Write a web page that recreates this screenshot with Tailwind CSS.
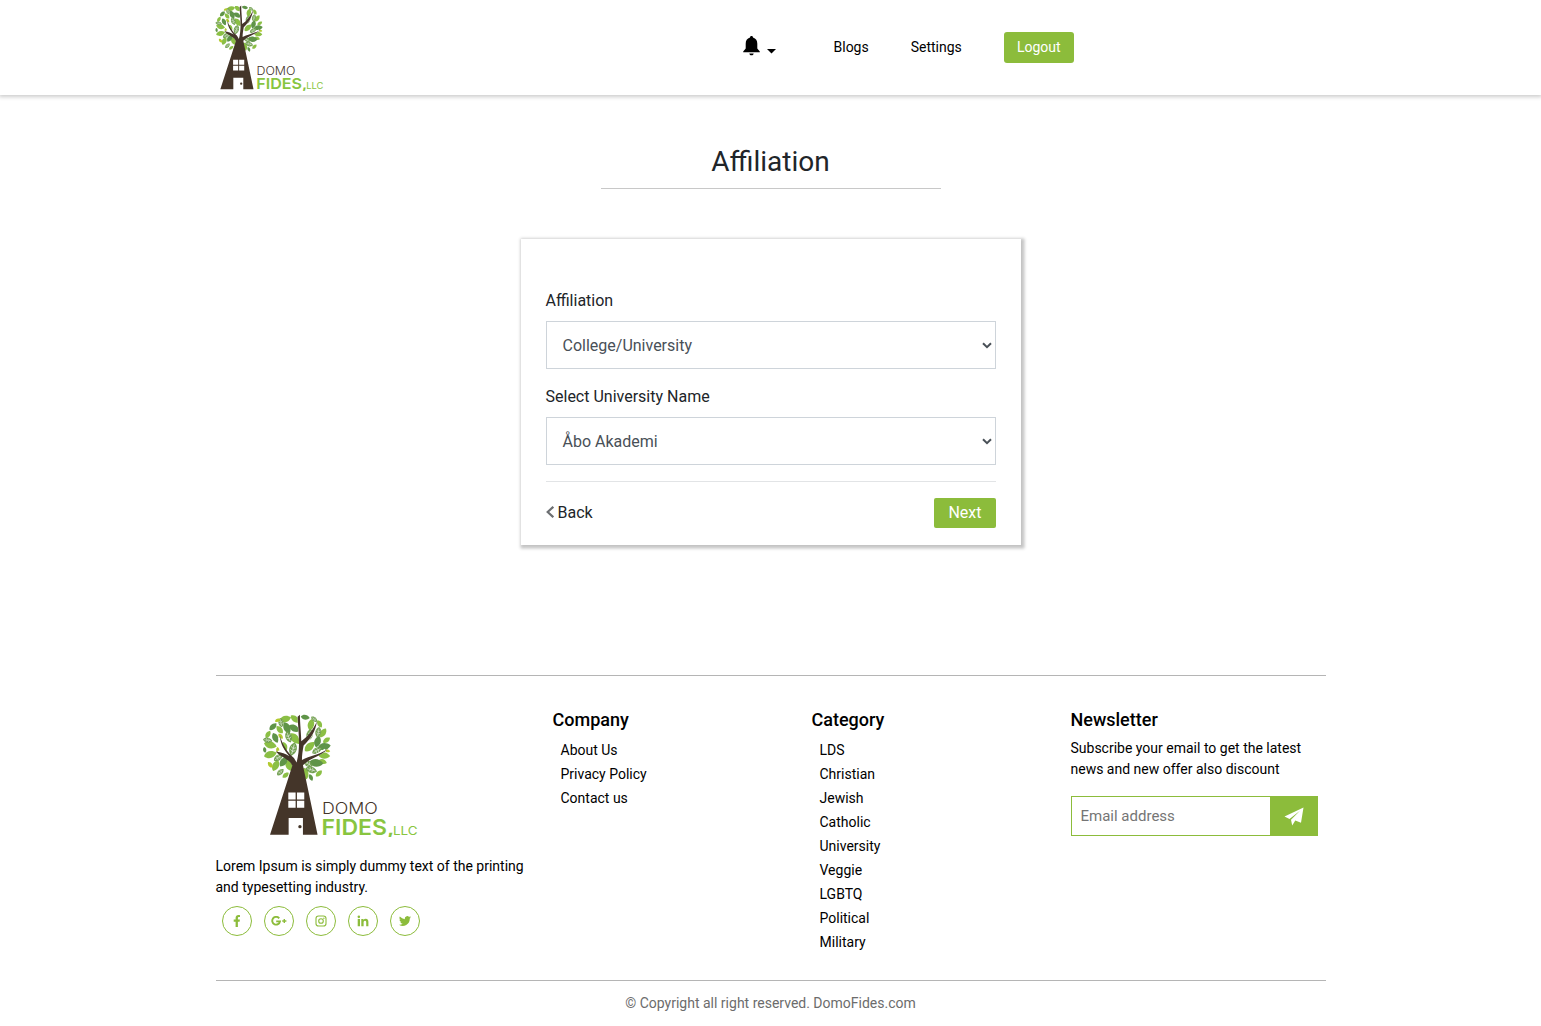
<!DOCTYPE html>
<html lang="en">
<head>
<meta charset="utf-8">
<title>Affiliation</title>
<script src="https://cdn.jsdelivr.net/npm/@tailwindcss/browser@4"></script>
</head>
<body class="bg-white font-[Roboto,sans-serif] text-[14px] leading-[21px] text-black">
<!-- shared logo artwork -->
<svg width="0" height="0" class="absolute" aria-hidden="true">
  <defs>
    <path id="leaf" d="M-18 0C-10 -13 7 -13 18 0C8 13 -9 13 -18 0Z"/>
    <g id="vein"><path d="M-18 0C-10 -13 7 -13 18 0C8 13 -9 13 -18 0Z"/><path d="M-13 0H13M-6 -7L-2 0L-6 7M2 -7L6 0L2 7" fill="none" stroke="#fff" stroke-width="1.5"/></g>
    <symbol id="logo" viewBox="36 26 470 370">
      <g transform="translate(30 21)">
        <g fill="#8bbf45">
          <use href="#leaf" transform="translate(75 20) rotate(-15)"/>
          <use href="#leaf" transform="translate(104 20) rotate(40) scale(.9)"/>
          <use href="#leaf" transform="translate(58 52) rotate(-130) scale(.8)"/>
          <use href="#leaf" transform="translate(104 79) rotate(50) scale(1.15)"/>
          <use href="#leaf" transform="translate(30 98) rotate(15) scale(1.1)"/>
          <use href="#leaf" transform="translate(152 38) rotate(100)"/>
          <use href="#leaf" transform="translate(178 35) rotate(60) scale(.7)"/>
          <use href="#leaf" transform="translate(188 62) rotate(-55) scale(.9)"/>
          <use href="#leaf" transform="translate(148 103) rotate(-45) scale(1.1)"/>
          <use href="#leaf" transform="translate(30 127) rotate(-15) scale(1.1)"/>
          <use href="#leaf" transform="translate(46 160) rotate(-65)"/>
          <use href="#leaf" transform="translate(86 160) rotate(65)"/>
          <use href="#leaf" transform="translate(192 130) rotate(5)"/>
          <use href="#leaf" transform="translate(188 148) rotate(20) scale(.7)"/>
          <use href="#leaf" transform="translate(135 184) rotate(75)"/>
          <use href="#leaf" transform="translate(76 189) rotate(-40) scale(.65)"/>
          <use href="#leaf" transform="translate(176 184) rotate(-45) scale(.7)"/>
          <use href="#leaf" transform="translate(199 84) rotate(-35) scale(.7)"/>
          <use href="#leaf" transform="translate(73 103) rotate(70) scale(.8)"/>
          <use href="#leaf" transform="translate(23 66) rotate(-60) scale(.7)"/>
        </g>
        <g fill="#5f9448">
          <use href="#leaf" transform="translate(102 48) rotate(30)"/>
          <use href="#leaf" transform="translate(80 47) rotate(65) scale(1.05)"/>
          <use href="#leaf" transform="translate(135 15) rotate(10) scale(.75)"/>
          <use href="#leaf" transform="translate(45 77) rotate(65) scale(.9)"/>
          <use href="#leaf" transform="translate(172 88) rotate(-75)"/>
          <use href="#leaf" transform="translate(192 103) rotate(-10) scale(1.1)"/>
          <use href="#leaf" transform="translate(168 152) rotate(5) scale(1.2)"/>
          <use href="#leaf" transform="translate(70 148) rotate(-55)"/>
          <use href="#leaf" transform="translate(38 43) rotate(-45) scale(.8)"/>
          <use href="#leaf" transform="translate(13 113) rotate(80) scale(.5)"/>
          <use href="#leaf" transform="translate(152 196) rotate(65) scale(.6)"/>
          <use href="#leaf" transform="translate(92 194) rotate(100) scale(.6)"/>
        </g>
        <g fill="#719f50">
          <use href="#vein" transform="translate(62 31) rotate(80) scale(.8)"/>
          <use href="#vein" transform="translate(85 74) rotate(70)"/>
          <use href="#vein" transform="translate(98 111) rotate(105) scale(1.15)"/>
          <use href="#vein" transform="translate(148 68) rotate(100)"/>
          <use href="#vein" transform="translate(174 60) rotate(100) scale(.9)"/>
          <use href="#vein" transform="translate(170 115) rotate(-30) scale(.9)"/>
          <use href="#vein" transform="translate(54 136) rotate(-35) scale(.9)"/>
          <use href="#vein" transform="translate(143 154) rotate(35) scale(.9)"/>
          <use href="#vein" transform="translate(153 173) rotate(15)"/>
          <use href="#vein" transform="translate(60 180) rotate(-45) scale(.75)"/>
          <use href="#vein" transform="translate(22 84) rotate(10) scale(.8)"/>
          <use href="#vein" transform="translate(162 21) rotate(40) scale(.65)"/>
        </g>
        <g fill="#b2ca2e">
          <use href="#leaf" transform="translate(61 72) rotate(50) scale(.55)"/>
          <use href="#leaf" transform="translate(30 158) rotate(50) scale(.6)"/>
          <use href="#leaf" transform="translate(52 24) rotate(-25) scale(.5)"/>
          <use href="#leaf" transform="translate(202 116) rotate(5) scale(.45)"/>
          <use href="#leaf" transform="translate(52 113) rotate(85) scale(.5)"/>
        </g>
      </g>
      <g fill="none" stroke="#fff" stroke-width="8">
        <path d="M136 186C126 160 94 150 88 98M144 170C158 120 146 90 146 36M154 125C176 104 190 80 198 54M150 176C180 154 200 152 226 134M124 160C104 146 96 142 82 140"/>
      </g>
      <g fill="#443529">
        <path d="M126 182C120 164 98 160 76 139C94 142 106 146 117 153C101 133 90 116 89 92C97 118 110 140 131 158L139 172C151 126 145 90 142 34L149 28C149 56 153 86 153 108C173 94 190 72 200 48C196 79 181 101 160 121C157 138 155 150 155 164C180 151 202 151 232 132C208 155 180 158 158 180L202 389H158V339H115V389H59Z"/>
      </g>
      <path d="M114 262h22v21h-22zM140 262h22v21h-22zM114 287h22v21h-22zM140 287h22v21h-22z" fill="#fff"/>
      <circle cx="149" cy="365" r="5" fill="#443529"/>
      <text x="215" y="328" font-family="Inter, sans-serif" font-size="49" font-weight="300" fill="#443529" textLength="168" lengthAdjust="spacingAndGlyphs">DOMO</text>
      <text x="214" y="389" font-family="Inter, sans-serif" font-size="65" font-weight="600" fill="#88c540" textLength="219" lengthAdjust="spacingAndGlyphs">FIDES,</text>
      <text x="429" y="389" font-family="Inter, sans-serif" font-size="36" font-weight="400" fill="#88c540" textLength="74" lengthAdjust="spacingAndGlyphs">LLC</text>
    </symbol>
  </defs>
</svg>

<header class="h-[95px] bg-white shadow-[0_1px_4px_1px_rgba(0,0,0,0.2)]">
  <div class="mx-auto flex h-full w-[1110px] items-start">
    <a class="-ml-[0.5px] block pt-[4.5px]"><svg class="h-[86px] w-[109px]"><use href="#logo"/></svg></a>
    <nav class="ml-[418.5px] flex h-[95px] items-center">
      <a class="flex items-center gap-[7px]">
        <svg class="-mt-[3px] h-5 w-[17px]" viewBox="0 0 17 20"><path d="M8.500 0C9.500 0 10 .7 10 1.600C13 2.400 14.300 4.800 14.300 7.800V12.500L16.800 15.600V16.300H.2V15.600L2.700 12.500V7.800C2.700 4.800 4 2.400 7 1.600C7 .7 7.500 0 8.500 0ZM6.300 17.400H10.700C10.500 18.700 9.600 19.300 8.500 19.300S6.500 18.700 6.300 17.400Z"/></svg>
        <svg class="mt-[7px] h-[5px] w-[9px]" viewBox="0 0 9 5"><path d="M0 0H9L4.500 4.500Z"/></svg>
      </a>
      <a class="ml-[58px]">Blogs</a>
      <a class="ml-[42px]">Settings</a>
      <a class="ml-[42px] flex h-[31px] w-[70px] items-center justify-center rounded-[3px] bg-[#8cbc3b] text-white">Logout</a>
    </nav>
  </div>
</header>

<main class="flex h-[580px] flex-col items-center pt-[49px]">
  <h1 class="flex h-[45px] w-[340px] justify-center border-b border-[#c8c8c8] pt-px text-[28px] leading-[34px] text-[#212529]">Affiliation</h1>
  <form class="mt-[50px] h-[306px] w-[500px] bg-white px-[25px] pt-[50px] text-[16px] leading-6 text-[#212529] shadow-[1px_1px_3px_2.5px_#c4c4c4]">
    <label class="block">Affiliation</label>
    <div class="mt-2 flex h-12 items-center justify-between border border-[#ced4da] pr-[3px] pl-4 text-[#495057]"><span class="pt-0.5">College/University</span>
      <svg class="h-[7px] w-[10px]" viewBox="0 0 10 7"><path d="M1 1.200L5 5.200L9 1.200" fill="none" stroke="#495057" stroke-width="2"/></svg>
    </div>
    <label class="mt-4 block">Select University Name</label>
    <div class="mt-2 flex h-12 items-center justify-between border border-[#ced4da] pr-[3px] pl-4 text-[#495057]"><span class="pt-0.5">Åbo Akademi</span>
      <svg class="h-[7px] w-[10px]" viewBox="0 0 10 7"><path d="M1 1.200L5 5.200L9 1.200" fill="none" stroke="#495057" stroke-width="2"/></svg>
    </div>
    <div class="mt-4 flex items-center justify-between border-t border-[#e2e4e6] pt-4">
      <a class="flex items-center gap-1"><svg class="-mt-0.5 h-3 w-2" viewBox="0 0 8 12"><path d="M7.300 .8L1.700 6L7.300 11.200" fill="none" stroke="#6c6f72" stroke-width="2.200"/></svg>Back</a>
      <button type="button" class="h-[30px] w-[62px] rounded-[2px] bg-[#8cbc3b] pl-px text-white">Next</button>
    </div>
  </form>
</main>

<footer class="mx-auto w-[1110px]">
  <div class="flex h-[306px] border-y border-[#b5b5b5] pt-[33px]">
    <section class="w-[337px]">
      <svg class="mt-[5px] ml-[46px] h-[123px] w-[157px]"><use href="#logo"/></svg>
      <p class="mt-[19px]">Lorem Ipsum is simply dummy text of the printing<br>and typesetting industry.</p>
      <div class="mt-2 ml-1.5 flex gap-3">
        <a class="flex size-[30px] items-center justify-center rounded-full border border-[#8cbc3b]"><svg class="h-3 w-3 fill-[#8cbc3b]" viewBox="0 0 12 12"><path d="M4.600 12V6.700H2.700V4.500H4.600V2.900C4.600 1 5.700 0 7.400 0C8.200 0 9 .15 9 .15V2H8.100C7.200 2 6.900 2.500 6.900 3.100V4.500H8.900L8.600 6.700H6.900V12Z"/></svg></a>
        <a class="flex size-[30px] items-center justify-center rounded-full border border-[#8cbc3b]"><svg class="h-[10px] w-4" viewBox="0 0 16 10"><path d="M8.200 2.300A3.900 3.900 0 1 0 9 5.400H5.200" fill="none" stroke="#8cbc3b" stroke-width="1.900"/><path d="M13.300 2.900V7.100M11.200 5H15.400" stroke="#8cbc3b" stroke-width="1.400"/></svg></a>
        <a class="flex size-[30px] items-center justify-center rounded-full border border-[#8cbc3b]"><svg class="h-3 w-3" viewBox="0 0 12 12"><rect x="1" y="1" width="10" height="10" rx="2.600" fill="none" stroke="#8cbc3b" stroke-width="1.100"/><circle cx="6" cy="6" r="2.300" fill="none" stroke="#8cbc3b" stroke-width="1.100"/><circle cx="8.900" cy="3.200" r=".7" fill="#8cbc3b"/></svg></a>
        <a class="flex size-[30px] items-center justify-center rounded-full border border-[#8cbc3b]"><svg class="h-3 w-3 fill-[#8cbc3b]" viewBox="0 0 12 12"><path d="M.7 4H3V11.200H.7ZM4.300 4H6.500V5C7 4.200 7.800 3.800 8.700 3.800C10.800 3.800 11.400 5.200 11.400 7.100V11.200H9.200V7.500C9.200 6.600 9.100 5.700 8 5.700S6.600 6.600 6.600 7.500V11.200H4.300Z"/><circle cx="1.850" cy="1.850" r="1.300"/></svg></a>
        <a class="flex size-[30px] items-center justify-center rounded-full border border-[#8cbc3b]"><svg class="h-3 w-3 fill-[#8cbc3b]" viewBox="0 0 24 24"><path d="M24 4.600a10 10 0 0 1-2.800.8 5 5 0 0 0 2.100-2.700 10 10 0 0 1-3.100 1.200 4.900 4.900 0 0 0-8.400 4.500A14 14 0 0 1 1.700 3.200a4.900 4.900 0 0 0 1.500 6.500 5 5 0 0 1-2.200-.6 4.900 4.900 0 0 0 3.900 4.900 5 5 0 0 1-2.200.1 4.900 4.900 0 0 0 4.600 3.400A10 10 0 0 1 0 19.500a14 14 0 0 0 21.500-12.400A10 10 0 0 0 24 4.600z"/></svg></a>
      </div>
    </section>
    <section class="w-[259px]">
      <h2 class="text-[18px] leading-[22px] font-medium">Company</h2>
      <ul class="mt-[7px] pl-2 leading-6"><li>About Us</li><li>Privacy Policy</li><li>Contact us</li></ul>
    </section>
    <section class="w-[259px]">
      <h2 class="text-[18px] leading-[22px] font-medium">Category</h2>
      <ul class="mt-[7px] pl-2 leading-6"><li>LDS</li><li>Christian</li><li>Jewish</li><li>Catholic</li><li>University</li><li>Veggie</li><li>LGBTQ</li><li>Political</li><li>Military</li></ul>
    </section>
    <section class="w-[247px]">
      <h2 class="text-[18px] leading-[22px] font-medium">Newsletter</h2>
      <p class="mt-[7px]">Subscribe your email to get the latest<br>news and new offer also discount</p>
      <div class="mt-4 flex h-10 border border-[#8cbc3b]">
        <span class="flex flex-1 items-center pl-[9px] text-[15px] text-[#757575]">Email address</span>
        <span class="flex w-[47px] items-center justify-center bg-[#8cbc3b] pl-0.5"><svg class="h-[19px] w-5" viewBox="0 0 20 19"><path d="M19.500 .5L17 15.800L11.300 13.600L8.200 18.500L7 12.800L16 3.800L5.500 11.900L.5 9.500Z" fill="#fff"/></svg></span>
      </div>
    </section>
  </div>
  <p class="pt-3 text-center text-[#6c6c6c]">© Copyright all right reserved. DomoFides.com</p>
</footer>
</body>
</html>
